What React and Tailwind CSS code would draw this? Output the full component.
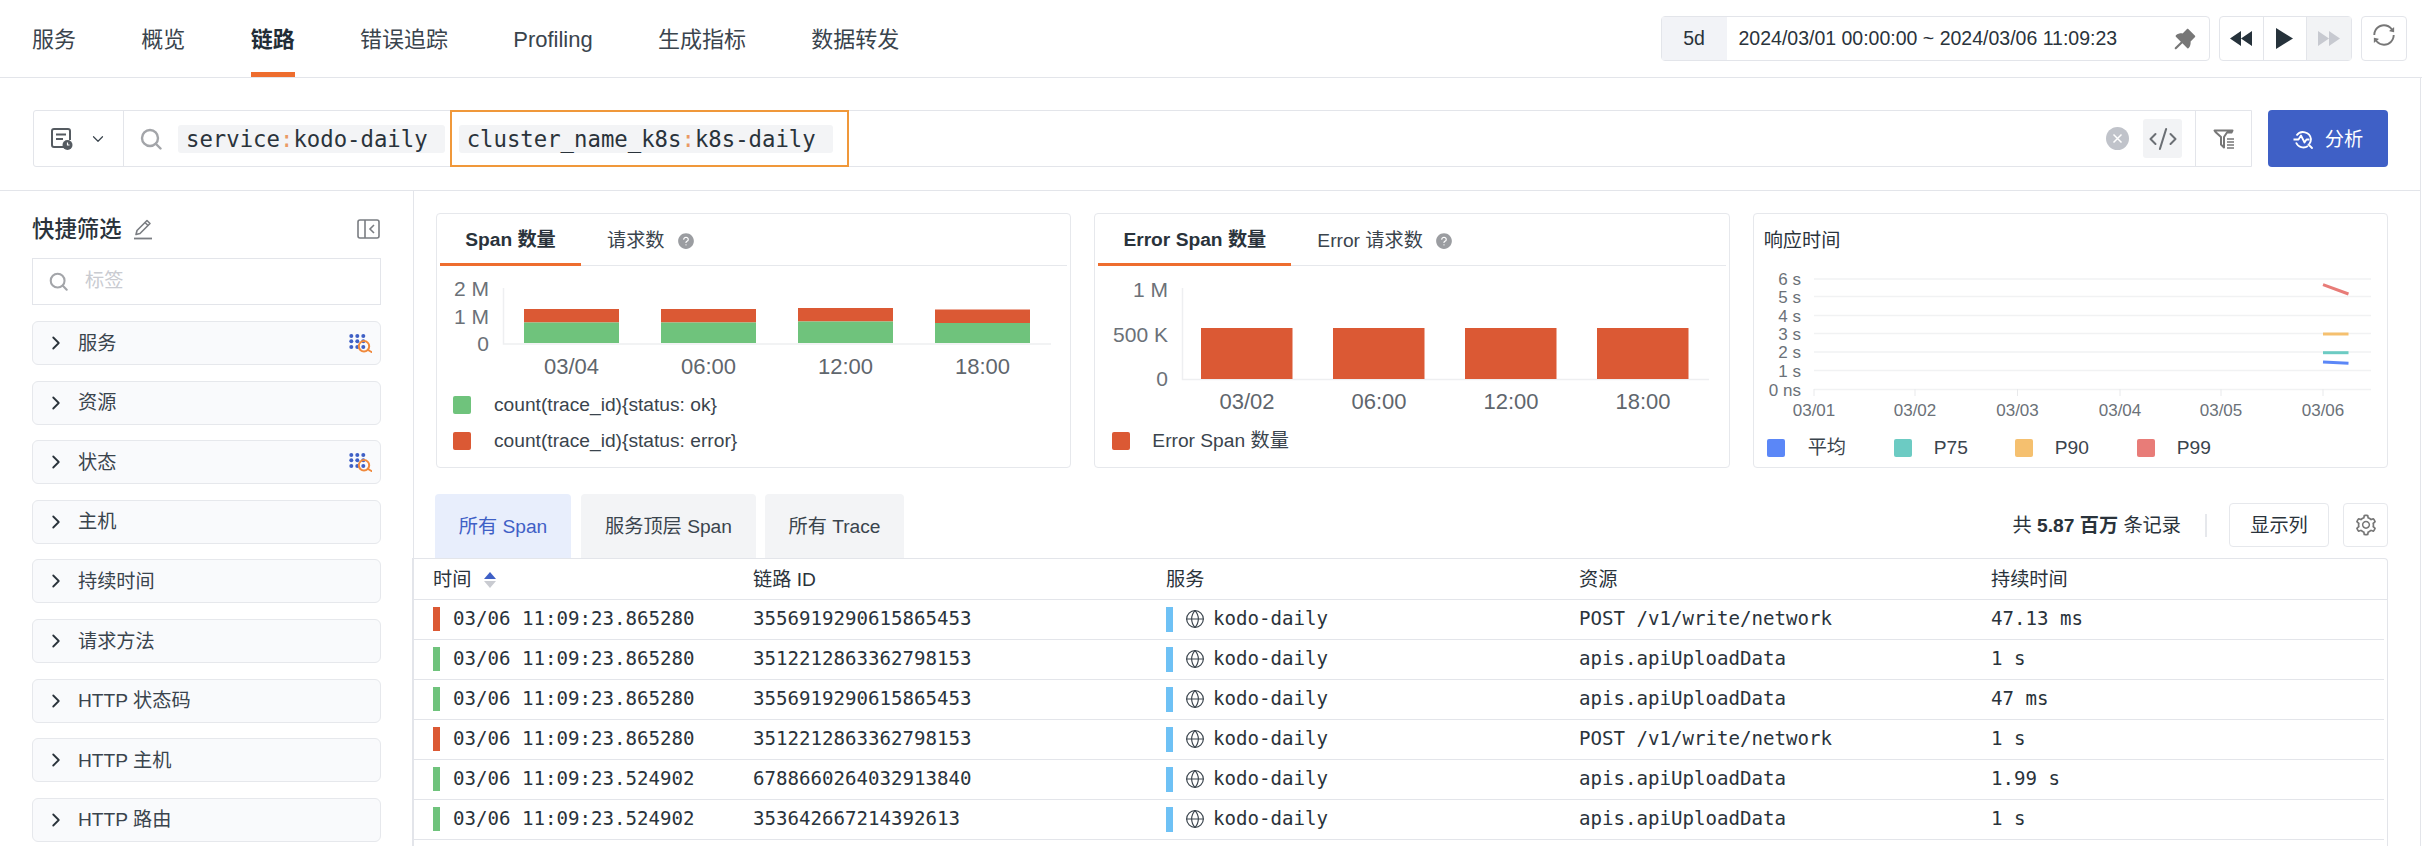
import { ChevronDown, ChevronRight, CodeXml, Globe } from "lucide-react";
import { AiFillPushpin, AiFillQuestionCircle, AiOutlineSetting, AiOutlineSync } from "react-icons/ai";

const SANS = "font-['Liberation_Sans','Noto_Sans_CJK_SC',sans-serif]";
const MONO = "font-['DejaVu_Sans_Mono','Noto_Sans_CJK_SC',monospace]";

const NAV = ["服务", "概览", "链路", "错误追踪", "Profiling", "生成指标", "数据转发"];

const FILTERS = [
  { label: "服务", dots: true },
  { label: "资源" },
  { label: "状态", dots: true },
  { label: "主机" },
  { label: "持续时间" },
  { label: "请求方法" },
  { label: "HTTP 状态码" },
  { label: "HTTP 主机" },
  { label: "HTTP 路由" },
];

const ROWS = [
  { err: true, time: "03/06 11:09:23.865280", id: "3556919290615865453", res: "POST /v1/write/network", dur: "47.13 ms" },
  { err: false, time: "03/06 11:09:23.865280", id: "3512212863362798153", res: "apis.apiUploadData", dur: "1 s" },
  { err: false, time: "03/06 11:09:23.865280", id: "3556919290615865453", res: "apis.apiUploadData", dur: "47 ms" },
  { err: true, time: "03/06 11:09:23.865280", id: "3512212863362798153", res: "POST /v1/write/network", dur: "1 s" },
  { err: false, time: "03/06 11:09:23.524902", id: "6788660264032913840", res: "apis.apiUploadData", dur: "1.99 s" },
  { err: false, time: "03/06 11:09:23.524902", id: "353642667214392613", res: "apis.apiUploadData", dur: "1 s" },
];

// bars in page coordinates, the svg viewBox lines up with the screenshot
const SPAN_BARS = [
  { x: 524, label: "03/04", top: 309, split: 322.5 },
  { x: 661, label: "06:00", top: 309, split: 322.5 },
  { x: 798, label: "12:00", top: 308, split: 321.5 },
  { x: 935, label: "18:00", top: 309.5, split: 323 },
];
const ERROR_BARS = [
  { x: 1201, label: "03/02" },
  { x: 1333, label: "06:00" },
  { x: 1465, label: "12:00" },
  { x: 1597, label: "18:00" },
];
const RT_GRID = [
  { y: 279, label: "6 s" },
  { y: 296.5, label: "5 s" },
  { y: 315.5, label: "4 s" },
  { y: 333.5, label: "3 s" },
  { y: 352, label: "2 s" },
  { y: 370.5, label: "1 s" },
  { y: 389.5, label: "0 ns" },
];
const RT_TICKS = [
  { x: 1814, label: "03/01" },
  { x: 1915, label: "03/02" },
  { x: 2017.5, label: "03/03" },
  { x: 2120, label: "03/04" },
  { x: 2221, label: "03/05" },
  { x: 2323, label: "03/06" },
];

function DotsSearch() {
  return (
    <svg width="23" height="19" viewBox="0 0 23 19" className="ml-auto mr-[8px]">
      {[2.3, 8.3, 14.3].map((x) =>
        [2, 7.3, 13].map((y) => <circle key={`${x}-${y}`} cx={x} cy={y} r="2" fill="#3f60c6" />)
      )}
      <circle cx="15" cy="12.3" r="5.2" fill="none" stroke="#f0893c" strokeWidth="2" />
      <path d="M19 16l3.5 2" stroke="#f0893c" strokeWidth="2" strokeLinecap="round" />
    </svg>
  );
}

function SearchIcon({ size = 22, color = "#a3a5a9" }) {
  return (
    <svg width={size} height={size} viewBox="0 0 22 22" fill="none" stroke={color} strokeWidth="2.4">
      <circle cx="10" cy="10" r="8" />
      <path d="M16 16l4.5 4.5" strokeLinecap="round" />
    </svg>
  );
}

function DocClock() {
  return (
    <svg width="24" height="24" viewBox="0 0 24 24" fill="none">
      <path d="M14 20H4a2 2 0 0 1-2-2V4a2 2 0 0 1 2-2h14a2 2 0 0 1 2 2v9" stroke="#555b61" strokeWidth="2" />
      <path d="M6 7.5h10M6 12h7" stroke="#555b61" strokeWidth="2" />
      <circle cx="17.5" cy="18" r="5" fill="#555b61" />
      <path d="M17.5 15.5V18h2" stroke="#fff" strokeWidth="1.2" />
    </svg>
  );
}

function FilterList() {
  return (
    <svg width="22" height="20" viewBox="0 0 22 20" fill="none">
      <path d="M1.5 1.5h18l-1 2H14L11 8v10.5L8 15.5V8L2.5 3z" stroke="#777" strokeWidth="2" strokeLinejoin="round" />
      <path d="M14 10h7M14 13h7M14 16h7M14 19h7" stroke="#777" strokeWidth="1.6" />
    </svg>
  );
}

function AnalyzeIcon() {
  return (
    <svg width="21" height="20" viewBox="0 0 21 20" fill="none" stroke="#fff" strokeWidth="1.8">
      <path d="M3.5 6.5A8 8 0 0 1 18 10a8 8 0 0 1-1.7 5" />
      <path d="M3 13.5A8 8 0 0 0 15 17" />
      <path d="M0.5 10.5h5l2.5-4 3.5 7 2-3h3" strokeLinejoin="round" />
      <path d="M15.5 15.5l3.5 3.5" strokeLinecap="round" />
    </svg>
  );
}

function EditIcon() {
  return (
    <svg width="20" height="22" viewBox="0 0 20 22" fill="none" stroke="#7a7d82" strokeWidth="1.6">
      <path d="M3 16.5l1-4L14 2.5l3 3L7 15.5z" strokeLinejoin="round" />
      <path d="M12 4.5l3 3" />
      <path d="M1 20.5h18" strokeWidth="1.8" />
    </svg>
  );
}

function CollapseIcon() {
  return (
    <svg width="23" height="20" viewBox="0 0 23 20" fill="none" stroke="#7a7d82" strokeWidth="1.6">
      <rect x="1" y="1" width="21" height="18" rx="2" />
      <path d="M8 1v18" />
      <path d="M17 6l-4 4 4 4" />
    </svg>
  );
}

function PlayBtn({ children, className = "" }) {
  return <div className={`flex h-full w-[43.5px] items-center justify-center ${className}`}>{children}</div>;
}

function Tag({ k, v }) {
  return (
    <span className={`flex h-[28px] items-center rounded-[3px] bg-[#f3f4f6] pl-[8px] pr-[17px] pt-[2px] text-[22.3px] text-[#2a333b] ${MONO}`}>
      {k}
      <span className="text-[#ea9a64]">:</span>
      {v}
    </span>
  );
}

function Legend({ color, children, className = "" }) {
  return (
    <div className={`flex h-[36px] items-center ${className}`}>
      <span className="h-[18px] w-[18px] rounded-[2px]" style={{ background: color }} />
      {children}
    </div>
  );
}

function CardTabs({ active, other, activeW }) {
  return (
    <div className="mx-[3px] flex h-[52px] border-b border-[#e6e8ec] text-[19.2px]">
      <div className={`flex h-[52px] items-center justify-center border-b-[3px] border-[#ee6d2e] pt-[4px] font-semibold text-[#2a333b] ${activeW}`}>
        {active}
      </div>
      <div className="flex items-center pl-[26px] pt-[3px] text-[#3a444d]">
        {other}
        <AiFillQuestionCircle className="ml-[12px] text-[#9b9da1]" size={18} />
      </div>
    </div>
  );
}

function SpanChart() {
  return (
    <svg width="633" height="121" viewBox="437 266 633 121" className="block">
      <path d="M503.5 288V344H1051" fill="none" stroke="#eeeff1" strokeWidth="1.5" />
      {[["2 M", 288], ["1 M", 316], ["0", 343]].map(([t, y]) => (
        <text key={t} x="489" y={y} dy="0.36em" textAnchor="end" className="fill-[#6b7178] text-[21px]">{t}</text>
      ))}
      {SPAN_BARS.map((b) => (
        <g key={b.x}>
          <rect x={b.x} y={b.top} width="95" height={b.split - b.top} fill="#db5934" />
          <rect x={b.x} y={b.split} width="95" height={343 - b.split} fill="#6fc37c" />
          <text x={b.x + 47.5} y="366" dy="0.36em" textAnchor="middle" className="fill-[#5f666d] text-[22px]">{b.label}</text>
        </g>
      ))}
    </svg>
  );
}

function ErrorChart() {
  return (
    <svg width="633" height="157" viewBox="1095 266 633 157" className="block">
      <path d="M1182.5 288V379.5H1709" fill="none" stroke="#eeeff1" strokeWidth="1.5" />
      {[["1 M", 289], ["500 K", 334], ["0", 378]].map(([t, y]) => (
        <text key={t} x="1168" y={y} dy="0.36em" textAnchor="end" className="fill-[#6b7178] text-[21px]">{t}</text>
      ))}
      {ERROR_BARS.map((b) => (
        <g key={b.x}>
          <rect x={b.x} y="328" width="91.5" height="51" fill="#db5934" />
          <text x={b.x + 46} y="401" dy="0.36em" textAnchor="middle" className="fill-[#5f666d] text-[22px]">{b.label}</text>
        </g>
      ))}
    </svg>
  );
}

function ResponseChart() {
  return (
    <svg width="633" height="164" viewBox="1754 266 633 164" className="block">
      {RT_GRID.map((g) => (
        <g key={g.y}>
          <path d={`M1814 ${g.y}H2371`} stroke="#f1f2f3" strokeWidth="1.5" />
          <text x="1801" y={g.y} dy="0.36em" textAnchor="end" className="fill-[#6b7178] text-[17px]">{g.label}</text>
        </g>
      ))}
      {RT_TICKS.map((t) => (
        <g key={t.x}>
          <path d={`M${t.x} 389V396`} stroke="#e8e9eb" />
          <text x={t.x} y="410" dy="0.36em" textAnchor="middle" className="fill-[#6b7178] text-[17px]">{t.label}</text>
        </g>
      ))}
      <path d="M2323 284.7L2348.5 294" stroke="#e87c78" strokeWidth="3" />
      <path d="M2323 334H2348.5" stroke="#f5c06f" strokeWidth="3" />
      <path d="M2323 352.7H2348.5" stroke="#6ccbc3" strokeWidth="3" />
      <path d="M2323 362L2348.5 363.3" stroke="#5b87f7" strokeWidth="3" />
    </svg>
  );
}

function Sidebar() {
  return (
    <aside className="h-full w-[414px] shrink-0 border-r border-[#e3e5ea] px-[32px] pt-[20px]">
      <div className="flex h-[36px] items-center">
        <span className="pt-[2px] text-[22.4px] font-medium text-[#2a333b]">快捷筛选</span>
        <span className="ml-[11px]"><EditIcon /></span>
        <span className="ml-auto mr-[1px]"><CollapseIcon /></span>
      </div>
      <div className="mt-[11px] flex h-[47px] items-center border border-[#e3e5ea] pl-[16px]">
        <SearchIcon size={19} />
        <span className="ml-[17px] text-[19.2px] text-[#c9cbd1]">标签</span>
      </div>
      <div className="mt-[16px] flex flex-col gap-[15.6px]">
        {FILTERS.map((f) => (
          <div key={f.label} className="flex h-[44px] shrink-0 items-center rounded-[6px] border border-[#e6e8ec] bg-[#f9fafc] pl-[11.5px] text-[19.2px] text-[#3a444d]">
            <ChevronRight size={22} strokeWidth={2} className="text-[#2a333b]" />
            <span className="ml-[11.5px] pt-[2px]">{f.label}</span>
            {f.dots && <DotsSearch />}
          </div>
        ))}
      </div>
    </aside>
  );
}

function SpanTable() {
  const cols = "grid grid-cols-[320px_413px_413px_412px_1fr] items-center pl-[19px]";
  return (
    <div className="-ml-[2px] mr-[32px] rounded-tr-[4px] border-t border-r border-[#e3e5ea] border-l-2 h-full">
      <div className={`${cols} h-[41px] border-b border-[#e3e5ea] pt-[2px] text-[19.2px] text-[#2a333b]`}>
        <div className="flex items-center">
          时间
          <svg width="14" height="16" viewBox="0 0 14 16" className="ml-[12px]">
            <path d="M7 0l6 7H1z" fill="#3f60c6" />
            <path d="M7 16l-6-7h12z" fill="#c9cbd1" />
          </svg>
        </div>
        <div>链路 ID</div>
        <div>服务</div>
        <div>资源</div>
        <div>持续时间</div>
      </div>
      {ROWS.map((r, i) => (
        <div key={i} className={`${cols} mr-[3px] h-[40px] border-b border-[#e3e5ea] text-[19.1px] text-[#2a333b] ${MONO}`}>
          <div className="flex items-center">
            <span className={`h-[24px] w-[7px] ${r.err ? "bg-[#db5934]" : "bg-[#6fc37c]"}`} />
            <span className="ml-[13px]">{r.time}</span>
          </div>
          <div>{r.id}</div>
          <div className="flex items-center">
            <span className="h-[25px] w-[7px] bg-[#6ec1f5]" />
            <Globe size={20} strokeWidth={1.4} className="ml-[12px] text-[#3a444d]" />
            <span className="ml-[8px]">kodo-daily</span>
          </div>
          <div>{r.res}</div>
          <div>{r.dur}</div>
        </div>
      ))}
    </div>
  );
}

export default function App() {
  return (
    <div className={`h-[846px] w-[2422px] overflow-hidden bg-white ${SANS}`}>
      {/* top nav */}
      <nav className="flex h-[78px] border-b border-[#e3e5ea] pl-[32px] pr-[15px]">
        <div className="flex gap-[65.3px]">
          {NAV.map((n) => (
            <div
              key={n}
              className={`flex h-[77px] items-center border-b-[5px] pt-[7px] text-[22px] ${
                n === "链路" ? "border-[#ee6d2e] font-semibold text-[#222d37]" : "border-transparent text-[#3a444d]"
              }`}
            >
              {n}
            </div>
          ))}
        </div>
        <div className="ml-auto flex h-[77px] items-center gap-[9.5px]">
          <div className="flex h-[45px] w-[549px] items-center rounded-[4px] border border-[#e3e5ea] pr-[10px] text-[19.5px] text-[#2a333b]">
            <span className="flex h-full w-[65px] items-center justify-center bg-[#f2f3f7]">5d</span>
            <span className="ml-[12px]">2024/03/01 00:00:00 ~ 2024/03/06 11:09:23</span>
            <AiFillPushpin size={28} className="ml-auto text-[#777]" />
          </div>
          <div className="flex h-[45px] divide-x divide-[#e3e5ea] rounded-[4px] border border-[#e3e5ea]">
            <PlayBtn>
              <svg width="22" height="15" viewBox="0 0 22 15" fill="#26323b"><path d="M11 0v15L0 7.5zM22 0v15L11 7.5z" /></svg>
            </PlayBtn>
            <PlayBtn>
              <svg width="17" height="21" viewBox="0 0 17 21" fill="#26323b"><path d="M0 0l17 10.5L0 21z" /></svg>
            </PlayBtn>
            <PlayBtn className="bg-[#f2f3f5]">
              <svg width="22" height="15" viewBox="0 0 22 15" fill="#c7c9d0"><path d="M0 0v15l11-7.5zM11 0v15l11-7.5z" /></svg>
            </PlayBtn>
          </div>
          <div className="flex h-[45px] w-[46px] items-center justify-center rounded-[4px] border border-[#e3e5ea] pb-[7px]">
            <AiOutlineSync size={26} className="text-[#777]" />
          </div>
        </div>
      </nav>

      <div className="h-[768px] w-[2421px] border-r border-[#e3e5ea]">
        {/* query bar */}
        <div className="flex h-[113px] border-b border-[#e3e5ea] pl-[33px] pr-[32px] pt-[32px]">
          <div className="flex h-[57px] flex-1 rounded-l-[3px] border border-[#e3e5ea]">
            <div className="flex w-[90px] items-center border-r border-[#e3e5ea] pl-[16px]">
              <DocClock />
              <ChevronDown size={18} strokeWidth={1.6} className="ml-[15px] text-[#3a444d]" />
            </div>
            <div className="flex items-center pl-[16px]">
              <SearchIcon />
              <span className="ml-[16px]"><Tag k="service" v="kodo-daily" /></span>
            </div>
            <div className="-my-[1px] ml-[5.5px] flex h-[57px] items-center border-[2.5px] border-[#f0983a] pl-[6.5px] pr-[14.5px]">
              <Tag k="cluster_name_k8s" v="k8s-daily" />
            </div>
            <div className="ml-auto flex items-center">
              <svg width="23" height="23" viewBox="0 0 23 23">
                <circle cx="11.5" cy="11.5" r="11.5" fill="#c0c3ca" />
                <path d="M7.5 7.5l8 8M15.5 7.5l-8 8" stroke="#fff" strokeWidth="1.5" />
              </svg>
              <div className="ml-[14px] flex h-[39px] w-[39px] items-center justify-center rounded-[3px] bg-[#f2f3f5]">
                <CodeXml size={30} strokeWidth={1.6} className="text-[#6b6f74]" />
              </div>
              <div className="ml-[13px] flex h-full w-[56px] items-center justify-center border-l border-[#e3e5ea]">
                <FilterList />
              </div>
            </div>
          </div>
          <button className="ml-[16px] flex h-[57px] w-[120px] items-center justify-center gap-[11px] rounded-[4px] bg-[#3f60c6] text-[19.2px] text-white">
            <AnalyzeIcon />
            <span className="pt-[3px]">分析</span>
          </button>
        </div>

        <div className="flex h-[655px]">
          <Sidebar />
          <main className="min-w-0 flex-1">
            {/* charts */}
            <div className="grid grid-cols-3 gap-[23px] pl-[22px] pr-[32px] pt-[22px]">
              <section className="h-[255px] rounded-[4px] border border-[#e6e8ec]">
                <CardTabs active="Span 数量" other="请求数" activeW="w-[141px]" />
                <SpanChart />
                <div className="pl-[16px] text-[19.2px] text-[#3a444d]">
                  <Legend color="#6fc37c"><span className="ml-[23px]">count(trace_id){"{"}status: ok{"}"}</span></Legend>
                  <Legend color="#db5934"><span className="ml-[23px]">count(trace_id){"{"}status: error{"}"}</span></Legend>
                </div>
              </section>
              <section className="h-[255px] rounded-[4px] border border-[#e6e8ec]">
                <CardTabs active="Error Span 数量" other="Error 请求数" activeW="w-[193px]" />
                <ErrorChart />
                <div className="pl-[17px] text-[19.2px] text-[#3a444d]">
                  <Legend color="#db5934"><span className="ml-[22px]">Error Span 数量</span></Legend>
                </div>
              </section>
              <section className="h-[255px] rounded-[4px] border border-[#e6e8ec]">
                <div className="flex h-[52px] items-center pl-[10px] pt-[2px] text-[19.2px] text-[#2a333b]">响应时间</div>
                <ResponseChart />
                <div className="flex pl-[13px] text-[19.2px] text-[#3a444d]">
                  <Legend color="#5b87f7" className="w-[127px]"><span className="ml-[23px]">平均</span></Legend>
                  <Legend color="#6ccbc3" className="w-[121px]"><span className="ml-[22px]">P75</span></Legend>
                  <Legend color="#f5c06f" className="w-[122px]"><span className="ml-[22px]">P90</span></Legend>
                  <Legend color="#e87c78"><span className="ml-[22px]">P99</span></Legend>
                </div>
              </section>
            </div>

            {/* table tabs */}
            <div className="mt-[26px] flex h-[64px] pl-[21px] pr-[32px] text-[19.2px]">
              <div className="flex w-[136px] items-center justify-center rounded-t-[4px] bg-[#e8eefc] pt-[2px] text-[#3f60c6]">所有 Span</div>
              <div className="ml-[10px] flex w-[175px] items-center justify-center rounded-t-[4px] bg-[#f3f4f6] pt-[2px] text-[#3a444d]">服务顶层 Span</div>
              <div className="ml-[9px] flex w-[139px] items-center justify-center rounded-t-[4px] bg-[#f3f4f6] pt-[2px] text-[#3a444d]">所有 Trace</div>
              <div className="ml-auto flex items-center pb-[2px] text-[#2a333b]">
                <span className="pt-[2px]">共 <span className="font-semibold">5.87 百万</span> 条记录</span>
                <span className="ml-[24px] h-[23px] w-[2px] bg-[#e6e8ec]" />
                <div className="ml-[22px] flex h-[44px] w-[100px] items-center justify-center rounded-[4px] border border-[#e6e8ec] pt-[2px]">显示列</div>
                <div className="ml-[14px] flex h-[44px] w-[45px] items-center justify-center rounded-[4px] border border-[#e6e8ec]">
                  <AiOutlineSetting size={24} className="text-[#777]" />
                </div>
              </div>
            </div>

            <SpanTable />
          </main>
        </div>
      </div>
    </div>
  );
}
